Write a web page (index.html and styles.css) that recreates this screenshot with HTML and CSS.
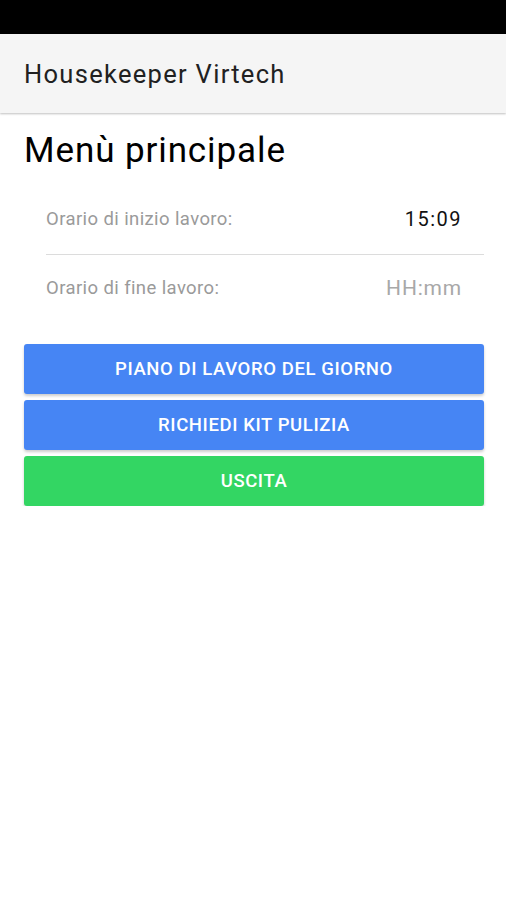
FILE: index.html
```html
<!DOCTYPE html>
<html lang="it">
<head>
    <meta charset="UTF-8">
    <meta name="viewport" content="width=device-width, initial-scale=1.0">
    <title>Housekeeper Virtech</title>
    <link rel="stylesheet" href="styles.css">
</head>
<body>
    <div class="status-bar"></div>
    <header class="app-bar">
        <h1>Housekeeper Virtech</h1>
    </header>

    <main class="content">
        <h2 class="page-title">Menù principale</h2>

        <section class="times">
            <div class="time-row">
                <span class="time-label">Orario di inizio lavoro:</span>
                <span class="time-value">15:09</span>
            </div>
            <div class="time-row">
                <span class="time-label">Orario di fine lavoro:</span>
                <span class="time-value empty">HH:mm</span>
            </div>
        </section>

        <section class="actions">
            <button class="btn btn-blue">Piano di lavoro del giorno</button>
            <button class="btn btn-blue">Richiedi kit pulizia</button>
            <button class="btn btn-green">Uscita</button>
        </section>
    </main>
</body>
</html>
```

FILE: styles.css
```css
body {
    font-family: Roboto, "Liberation Sans", sans-serif;
    background: #fff;
    margin: 0;
    padding: 0;
}
.status-bar {
    height: 34px;
    background: #000;
}
.app-bar {
    height: 79px;
    background: #f5f5f5;
    display: flex;
    align-items: center;
    padding: 0 24px;
    box-shadow: 0 1px 2px rgba(0, 0, 0, 0.25);
    position: relative;
}
.app-bar h1 {
    margin: 0;
    font-size: 25.5px;
    font-weight: 400;
    letter-spacing: 1.3px;
    color: #212121;
}
.content {
    padding: 0 22px 0 24px;
}
.page-title {
    margin: 0;
    padding-top: 16px;
    font-size: 35px;
    font-weight: 400;
    letter-spacing: 0.9px;
    color: #000;
    line-height: 44px;
}
.times {
    padding: 10px 0 0 22px;
}
.time-row {
    display: flex;
    justify-content: space-between;
    align-items: center;
    height: 66px;
    padding-right: 22px;
}
.time-row:first-child {
    height: 71px;
    border-bottom: 1px solid #dcdcdc;
}
.time-label {
    font-size: 18.5px;
    letter-spacing: 0.4px;
    color: #9a9a9a;
}
.time-value {
    font-size: 20px;
    letter-spacing: 1.5px;
    color: #111;
}
.time-value.empty {
    font-size: 21px;
    color: #a8a8a8;
    letter-spacing: 0.8px;
}
.actions {
    display: flex;
    flex-direction: column;
    gap: 6px;
    margin-top: 23px;
}
.btn {
    height: 50px;
    border: none;
    border-radius: 3px;
    color: #fff;
    font-family: Roboto, "Liberation Sans", sans-serif;
    font-size: 18.5px;
    font-weight: 500;
    letter-spacing: 0.6px;
    text-transform: uppercase;
    box-shadow: 0 2px 3px rgba(0, 0, 0, 0.2);
    cursor: pointer;
}
.btn-blue {
    background: #4685f4;
}
.btn-green {
    background: #33d663;
}
```
